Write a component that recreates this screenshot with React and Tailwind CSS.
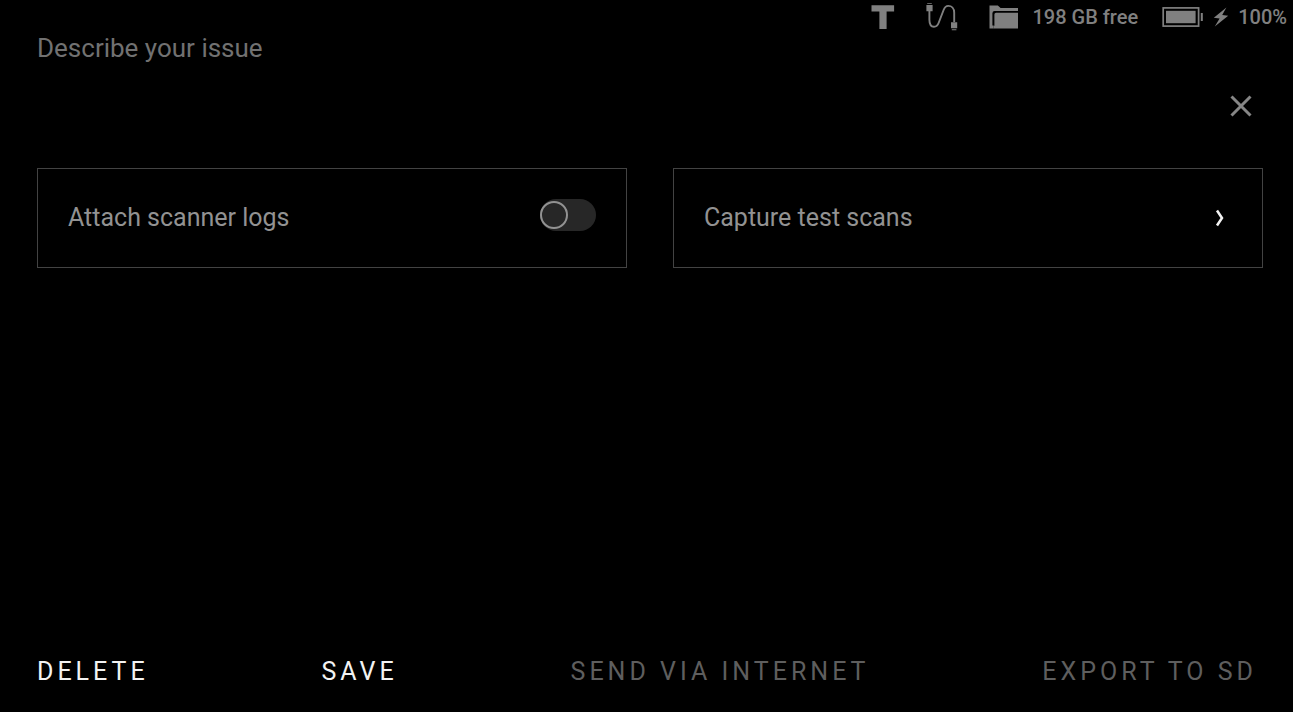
import { useState } from "react";

function TextIcon() {
  return (
    <svg className="h-6 w-6" viewBox="0 0 24 24" fill="currentColor" aria-hidden="true">
      <path d="M0.5 0.3h22.6v6.2H15.6V24H8.4V6.5H0.5z" />
    </svg>
  );
}

function CableIcon() {
  return (
    <svg className="h-7 w-8" viewBox="0 0 32 28" fill="none" aria-hidden="true">
      <path
        d="M3.4 8V16.8C3.4 21.5 5.3 23.8 8 23.8C10.4 23.8 11.8 22.3 12.7 19.8L17.6 7C18.6 4.3 19.9 2.9 22.3 2.9C25.5 2.9 28.2 5.2 28.2 9.8V19"
        stroke="currentColor"
        strokeWidth="1.9"
      />
      <path d="M0.4 2h6.2v6.2H0.4zM1.2 0.2h4.6v0.9H1.2zM25 19.2h6.2V25.2H25zM25.8 26.2h4.6v1h-4.6z" fill="currentColor" />
    </svg>
  );
}

function FolderIcon() {
  return (
    <svg className="h-6 w-[30px]" viewBox="0 0 30 24" fill="currentColor" aria-hidden="true">
      <path d="M0.5 0.5H8.8L11.6 3H29V6H5.6Q3.4 6 3.4 8.2V20.5H4.5V23.5H0.5z" />
      <path d="M7.1 7.8H29V23.5H4.5V20.8H5.4V9.5Q5.4 7.8 7.1 7.8z" />
    </svg>
  );
}

function BatteryIcon() {
  return (
    <svg className="h-5 w-[42px]" viewBox="0 0 42 20" aria-hidden="true">
      <rect x="1.2" y="0.9" width="35.4" height="18.2" fill="none" stroke="currentColor" strokeWidth="1.7" />
      <rect x="4" y="3.8" width="29.6" height="12.4" fill="currentColor" />
      <rect x="38.8" y="6" width="2" height="8" fill="currentColor" />
    </svg>
  );
}

function BoltIcon() {
  return (
    <svg className="h-5 w-4" viewBox="0 0 16 20" fill="currentColor" aria-hidden="true">
      <path d="M13.4 0.6L0.8 10.8L6.6 11.6L1.8 19.4L15.2 8.8L9.2 8.1z" />
    </svg>
  );
}

function StatusBar() {
  return (
    <header className="flex h-[34px] items-center justify-end pr-1.5 text-xl font-medium text-[#808080]">
      <div className="flex items-center gap-[31px]">
        <TextIcon />
        <CableIcon />
        <div className="flex items-center gap-3.5">
          <FolderIcon />
          <span>198 GB free</span>
        </div>
      </div>
      <div className="ml-6 flex items-center gap-[9px]">
        <BatteryIcon />
        <BoltIcon />
        <span>100%</span>
      </div>
    </header>
  );
}

export default function App() {
  const [issue, setIssue] = useState("");
  const [attachLogs, setAttachLogs] = useState(false);

  return (
    <div className="flex min-h-screen flex-col bg-black font-['Roboto',sans-serif] text-[25px]">
      <StatusBar />
      <main className="flex flex-1 flex-col pl-[37px] pr-[30px]">
        <div className="flex h-[94px]">
          <textarea
            aria-label="Describe your issue"
            placeholder="Describe your issue"
            value={issue}
            onChange={(e) => setIssue(e.target.value)}
            className="flex-1 resize-none bg-transparent text-[26px] leading-7 text-[#9a9a9a] outline-none placeholder:text-[#717171]"
          />
          <button
            type="button"
            aria-label="Close"
            className="flex h-11 w-11 items-center justify-center self-end text-[#868686]"
          >
            <svg className="h-6 w-6" viewBox="0 0 24 24" fill="none" stroke="currentColor" strokeWidth="3" aria-hidden="true">
              <path d="M2.5 2.5L21.5 21.5M21.5 2.5L2.5 21.5" />
            </svg>
          </button>
        </div>

        <div className="mt-10 grid grid-cols-2 gap-[46px] leading-[38px] text-[#929292]">
          <label className="flex items-start justify-between border border-[#434343] px-[30px] py-[30px]">
            <span>Attach scanner logs</span>
            <input
              type="checkbox"
              role="switch"
              checked={attachLogs}
              onChange={(e) => setAttachLogs(e.target.checked)}
              className="flex h-8 w-14 appearance-none items-center rounded-full bg-[#272727] before:h-7 before:w-7 before:rounded-full before:border-2 before:border-[#929292] before:bg-[#272727] before:content-[''] checked:justify-end"
            />
          </label>
          <button type="button" className="flex items-center justify-between border border-[#434343] px-[30px] text-left">
            <span>Capture test scans</span>
            <svg className="h-6 w-6" viewBox="0 0 24 24" fill="none" stroke="#f2f2f2" strokeWidth="2.5" aria-hidden="true">
              <path d="M9 4.5L14 12L9 19.5" />
            </svg>
          </button>
        </div>
      </main>

      <footer className="flex items-center justify-between pb-6 pl-[37px] pr-9 leading-8 tracking-[4px] text-[#5e5e5e]">
        <button type="button" className="text-[#f2f2f2]">DELETE</button>
        <button type="button" className="text-[#f2f2f2]">SAVE</button>
        <button type="button" disabled>SEND VIA INTERNET</button>
        <button type="button" disabled>EXPORT TO SD</button>
      </footer>
    </div>
  );
}
